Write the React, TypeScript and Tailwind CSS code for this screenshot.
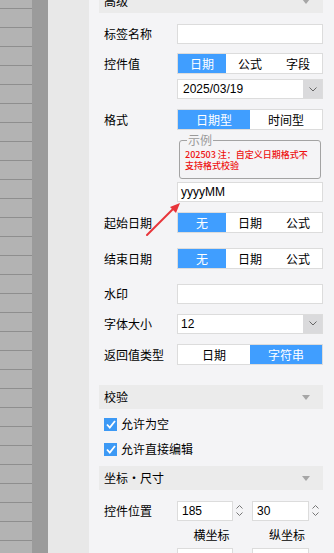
import React from "react";

const cjk = { fontFamily: '"Noto Sans CJK SC", "Noto Sans", sans-serif' };

function Segmented({ options, active }: { options: string[]; active: number }) {
  return (
    <div className="flex h-[21px] w-[146px] border border-[#dcdcdc] bg-white">
      {options.map((o, i) => (
        <div
          key={o}
          className={
            i === active
              ? "flex flex-1 items-center justify-center bg-[#409eff] text-[12px] text-white"
              : "flex flex-1 items-center justify-center text-[12px] text-black"
          }
        >
          {o}
        </div>
      ))}
    </div>
  );
}

function Input({ value }: { value?: string }) {
  return (
    <div
      className="flex h-[20px] w-[146px] items-center border border-[#dcdcdc] bg-white pl-[3px] text-[12px] text-black"
      style={{ fontFamily: '"Liberation Sans", sans-serif' }}
    >
      {value}
    </div>
  );
}

function Select({ value, pl }: { value: string; pl: string }) {
  return (
    <div className="flex h-[20px] w-[146px] border border-[#dcdcdc] bg-white">
      <div
        className={"flex flex-1 items-center text-[12px] text-black " + pl}
        style={{ fontFamily: '"Liberation Sans", sans-serif' }}
      >
        {value}
      </div>
      <div className="flex w-[19px] items-center justify-center bg-[#dadadc]">
        <svg width="8" height="5" viewBox="0 0 8 5">
          <path d="M0.5 0.5 L4 4 L7.5 0.5" fill="none" stroke="#666" strokeWidth="1" />
        </svg>
      </div>
    </div>
  );
}

function Row({ label, children, mt }: { label: string; children: React.ReactNode; mt: string }) {
  return (
    <div className={"flex h-[21px] items-center " + mt}>
      <div className="w-[78px] pl-[5px] text-[12px] leading-[16px] text-black">{label}</div>
      {children}
    </div>
  );
}

function Header({ title, mt }: { title: string; mt: string }) {
  return (
    <div className={"flex h-[24px] items-center justify-between bg-[#ebebeb] pl-[5px] pr-[13px] " + mt}>
      <span className="text-[12px] text-black">{title}</span>
      <svg width="8" height="5" viewBox="0 0 8 5">
        <path d="M0 0 L8 0 L4 5 Z" fill="#a6a6a6" />
      </svg>
    </div>
  );
}

function Check({ label, mt }: { label: string; mt: string }) {
  return (
    <div className={"flex h-[16px] items-center gap-[4px] pl-[5px] " + mt}>
      <div className="flex h-[13px] w-[13px] items-center justify-center bg-[#3c99f5]">
        <svg width="10" height="9" viewBox="0 0 10 9">
          <path d="M1 4.5 L3.8 7.5 L9 1" fill="none" stroke="#fff" strokeWidth="1.8" />
        </svg>
      </div>
      <span className="text-[12px] leading-[16px] text-black">{label}</span>
    </div>
  );
}

function Spin({ value, w }: { value: string; w: string }) {
  return (
    <div className={"flex h-[20px] " + w}>
      <div
        className="flex flex-1 items-center border border-[#dcdcdc] bg-white pl-[4px] text-[12px] text-black"
        style={{ fontFamily: '"Liberation Sans", sans-serif' }}
      >
        {value}
      </div>
      <div className="flex w-[13px] flex-col items-center justify-center gap-[3px]">
        <svg width="7" height="4" viewBox="0 0 7 4">
          <path d="M0.5 3.5 L3.5 0.5 L6.5 3.5" fill="none" stroke="#777" strokeWidth="1" />
        </svg>
        <svg width="7" height="4" viewBox="0 0 7 4">
          <path d="M0.5 0.5 L3.5 3.5 L6.5 0.5" fill="none" stroke="#777" strokeWidth="1" />
        </svg>
      </div>
    </div>
  );
}

const lines = Array.from({ length: 30 }, (_, i) => i);

export default function App() {
  return (
    <div className="relative flex h-[553px] w-[334px] overflow-hidden" style={cjk}>
      <div className="flex w-[32px] flex-col bg-[#b3b3b3] pt-[8px]">
        {lines.map((i) => (
          <div key={i} className="h-[19px] shrink-0 border-t border-[#8e8e8e]" />
        ))}
      </div>
      <div className="w-[16px] bg-[#9b9b9b]" />
      <div className="w-[41px] bg-[#e8e8e8]" />

      <div className="flex-1 bg-[#f4f4f6] pl-[10px] pr-[11px]">
        <Header title="高级" mt="mt-[-11px]" />

        <Row label="标签名称" mt="mt-[10px]">
          <Input />
        </Row>
        <Row label="控件值" mt="mt-[9px]">
          <Segmented options={["日期", "公式", "字段"]} active={0} />
        </Row>
        <div className="mt-[5px] pl-[78px]">
          <Select value="2025/03/19" pl="pl-[5px]" />
        </div>
        <Row label="格式" mt="mt-[10px]">
          <Segmented options={["日期型", "时间型"]} active={0} />
        </Row>

        <div className="ml-[80px] mt-[4px] w-[142px]">
          <fieldset className="h-[45px] rounded-[3px] border border-[#a3a3a3] pl-[5px] pr-[4px]">
            <legend className="ml-[2px] px-[1px] text-[12px] leading-[12px] text-[#9a9a9a]">示例</legend>
            <div className="mt-[3px] text-[9px] font-medium leading-[11px] text-[#ee1111]">
              <div>202503 注：自定义日期格式不</div>
              <div>支持格式校验</div>
            </div>
          </fieldset>
        </div>

        <div className="mt-[3px] pl-[78px]">
          <Input value="yyyyMM" />
        </div>

        <Row label="起始日期" mt="mt-[10px]">
          <Segmented options={["无", "日期", "公式"]} active={0} />
        </Row>
        <Row label="结束日期" mt="mt-[15px]">
          <Segmented options={["无", "日期", "公式"]} active={0} />
        </Row>
        <Row label="水印" mt="mt-[14px]">
          <Input />
        </Row>
        <Row label="字体大小" mt="mt-[9px]">
          <Select value="12" pl="pl-[3px]" />
        </Row>
        <Row label="返回值类型" mt="mt-[10px]">
          <Segmented options={["日期", "字符串"]} active={1} />
        </Row>

        <Header title="校验" mt="mt-[20px]" />
        <Check label="允许为空" mt="mt-[7px]" />
        <Check label="允许直接编辑" mt="mt-[9px]" />

        <Header title="坐标・尺寸" mt="mt-[9px]" />
        <Row label="控件位置" mt="mt-[10px]">
          <div className="flex gap-[6px]">
            <Spin value="185" w="w-[69px]" />
            <Spin value="30" w="w-[70px]" />
          </div>
        </Row>
        <div className="mt-[5px] flex gap-[6px] pl-[78px]">
          <div className="w-[69px] text-center text-[12px] text-black">横坐标</div>
          <div className="w-[70px] text-center text-[12px] text-black">纵坐标</div>
        </div>
        <div className="mt-[4px] flex gap-[6px] pl-[78px]">
          <Spin value="" w="w-[69px]" />
          <Spin value="" w="w-[70px]" />
        </div>
      </div>

      <svg className="pointer-events-none absolute left-[140px] top-[198px]" width="48" height="44" viewBox="0 0 48 44">
        <path d="M7 37 L34 10" stroke="#e8343a" strokeWidth="2" strokeLinecap="round" />
        <path d="M40 5 L30 9 L36 15 Z" fill="#e8343a" />
      </svg>
    </div>
  );
}
